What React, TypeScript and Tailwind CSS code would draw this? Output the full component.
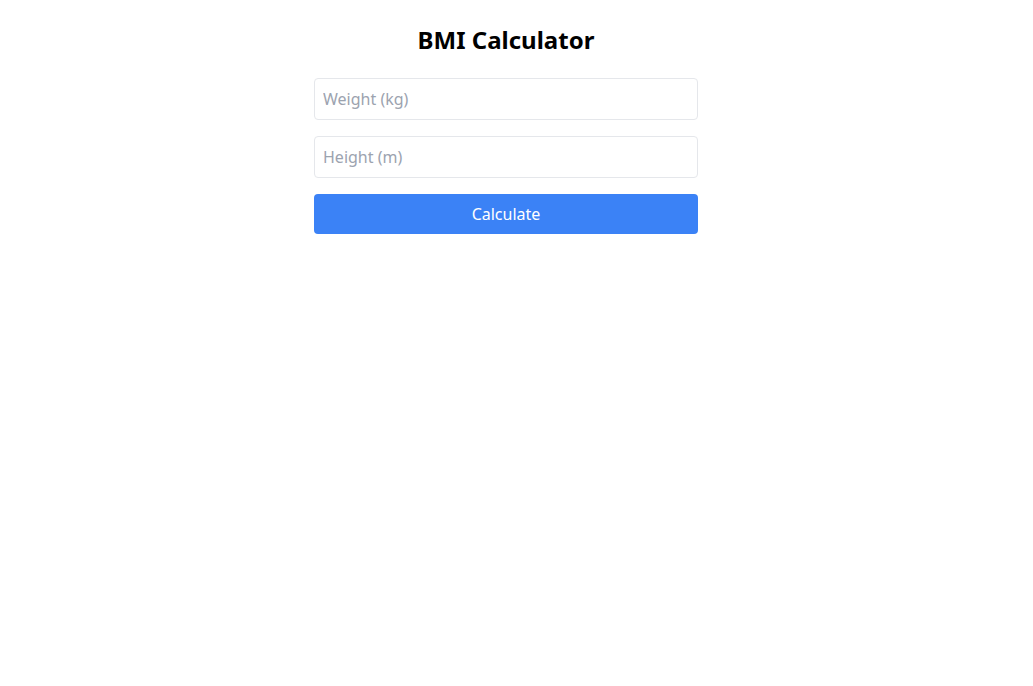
export default function App() {
  return (
    <div className="min-h-screen bg-white pr-[21px] font-['Noto_Sans',sans-serif]">
      <div className="mx-auto max-w-sm pt-6">
        <h1 className="mb-[22px] text-center text-2xl font-bold text-black">BMI Calculator</h1>
        <div className="flex flex-col gap-4">
          <input
            type="number"
            placeholder="Weight (kg)"
            className="w-full rounded border border-[#e5e7eb] p-2 text-base text-gray-800 placeholder:text-[#9ca3af] outline-none"
          />
          <input
            type="number"
            placeholder="Height (m)"
            className="w-full rounded border border-[#e5e7eb] p-2 text-base text-gray-800 placeholder:text-[#9ca3af] outline-none"
          />
          <button className="w-full rounded bg-[#3b82f6] py-2 text-base text-white">Calculate</button>
        </div>
      </div>
    </div>
  );
}
